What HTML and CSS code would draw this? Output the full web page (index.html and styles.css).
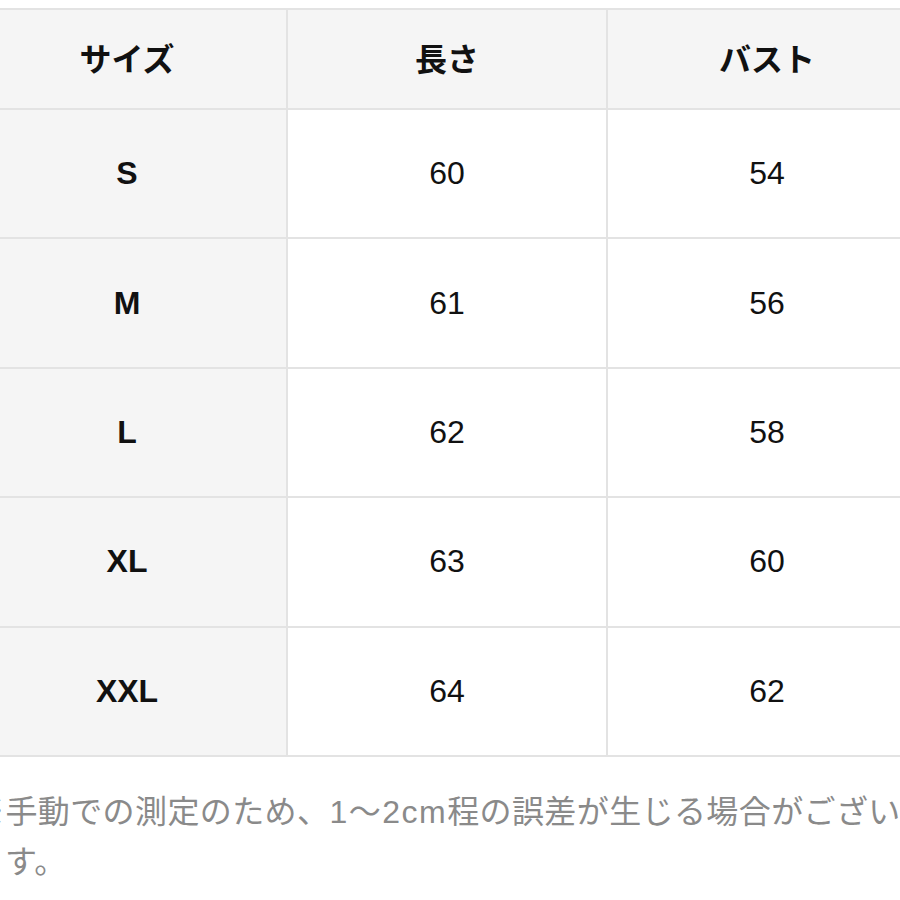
FILE: index.html
```html
<!DOCTYPE html>
<html lang="ja">
<head>
<meta charset="utf-8">
<title>サイズ表</title>
<link rel="stylesheet" href="styles.css">
</head>
<body>
<div class="size-table">
  <div class="cell head">サイズ</div>
  <div class="cell head">長さ</div>
  <div class="cell head">バスト</div>

  <div class="cell label">S</div>
  <div class="cell">60</div>
  <div class="cell">54</div>

  <div class="cell label">M</div>
  <div class="cell">61</div>
  <div class="cell">56</div>

  <div class="cell label">L</div>
  <div class="cell">62</div>
  <div class="cell">58</div>

  <div class="cell label">XL</div>
  <div class="cell">63</div>
  <div class="cell">60</div>

  <div class="cell label">XXL</div>
  <div class="cell">64</div>
  <div class="cell">62</div>
</div>
<p class="note">※手動での測定のため、<span class="range">1〜2cm</span>程の誤差が生じる場合がございます。</p>
</body>
</html>
```

FILE: styles.css
```css
html, body {
  margin: 0;
  padding: 0;
  background: #ffffff;
  overflow: hidden;
  width: 900px;
  height: 900px;
}

body {
  font-family: "Liberation Sans", "Noto Sans CJK JP", sans-serif;
  color: #111111;
}

.size-table {
  display: grid;
  grid-template-columns: repeat(3, 320px);
  grid-template-rows: 100px repeat(5, 129.4px);
  width: 960px;
  margin: 8px 0 0 -32px;
  border-top: 2px solid #e3e3e3;
}

.cell {
  display: flex;
  align-items: center;
  justify-content: center;
  box-sizing: border-box;
  border-right: 2px solid #e3e3e3;
  border-bottom: 2px solid #e3e3e3;
  font-size: 32px;
  background: #ffffff;
}

.head {
  background: #f5f5f5;
  font-family: "Noto Sans CJK JP", sans-serif;
  font-weight: 700;
  color: #111111;
  padding-bottom: 4px;
}

.label {
  background: #f5f5f5;
  font-weight: 700;
}

.note {
  margin: 30px 0 0 5px;
  width: 945px;
  font-family: "Liberation Sans", "Noto Sans CJK JP", sans-serif;
  font-size: 32px;
  line-height: 50px;
  letter-spacing: 0.4px;
  color: #8a8a8a;
  text-indent: -32px;
}

.range {
  letter-spacing: 1.5px;
}
```
